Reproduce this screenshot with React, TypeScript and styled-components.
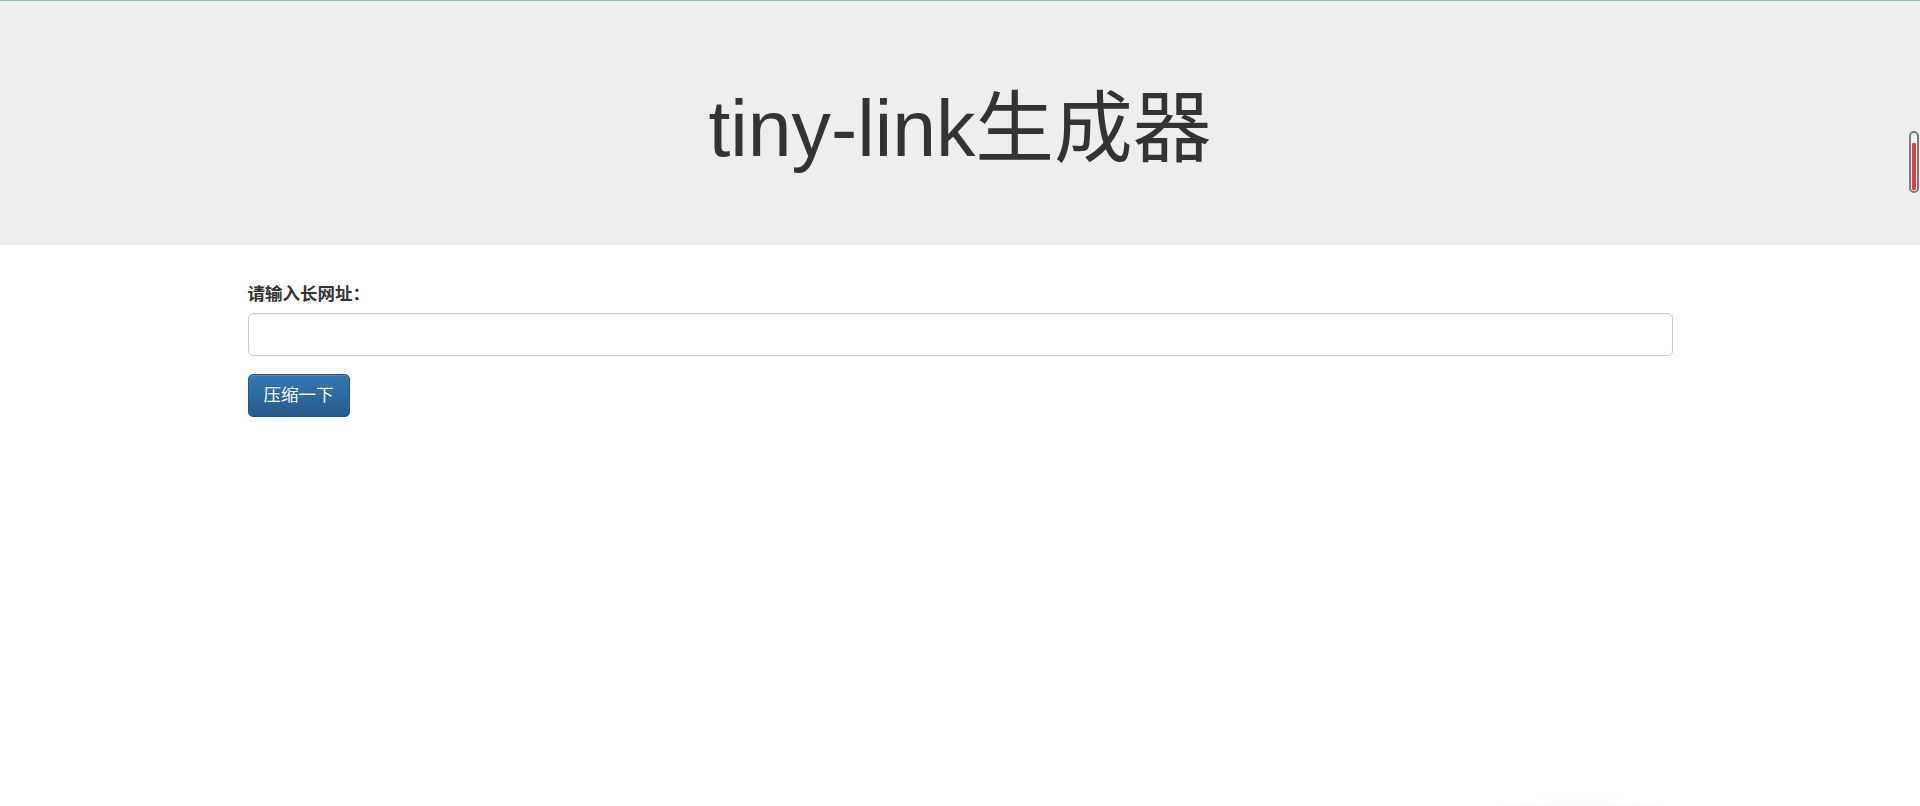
import React from "react";
import styled, { createGlobalStyle } from "styled-components";

const GlobalStyle = createGlobalStyle`
  html, body {
    margin: 0;
    padding: 0;
    background: #fff;
  }
  body {
    font-family: "Liberation Sans", Arial, "Noto Sans CJK SC", sans-serif;
    font-size: 17.5px;
    line-height: 1.42857;
    color: #333;
  }
  * { box-sizing: border-box; }
`;

const Jumbotron = styled.header`
  background: #eeeeee;
  border-top: 1px solid #8fb8bf;
  padding: 60px 0;
  margin-bottom: 37px;
`;

const Container = styled.div`
  width: 1462.5px;
  margin: 0 auto;
  padding: 0 18.75px;
`;

const Title = styled.h1`
  margin: 25px 0 12.5px;
  font-family: "Liberation Sans", Arial, "Noto Sans CJK SC", sans-serif;
  font-weight: 400;
  font-size: 78.75px;
  line-height: 86.6px;
  height: 86.6px;
  text-align: center;
  color: #333;
`;

const FormGroup = styled.div`
  margin-bottom: 18.75px;
`;

const Label = styled.label`
  display: block;
  height: 25px;
  margin-bottom: 6px;
  font-weight: 700;
  font-size: 17.5px;
  line-height: 25px;
  font-family: "Liberation Sans", "Noto Sans CJK SC", sans-serif;
  color: #333;
`;

const Input = styled.input`
  display: block;
  width: 100%;
  height: 42.5px;
  padding: 7.5px 15px;
  font-size: 17.5px;
  line-height: 25px;
  color: #555;
  background: #fff;
  border: 1.25px solid #ccc;
  border-radius: 5px;
  box-shadow: inset 0 1px 1px rgba(0, 0, 0, 0.075);
  outline: none;
`;

const Button = styled.button`
  display: block;
  height: 42.5px;
  padding: 7.5px 15px;
  font-family: "Liberation Serif", "Noto Sans CJK SC", sans-serif;
  font-size: 17.5px;
  line-height: 25px;
  color: #fff;
  background-image: linear-gradient(to bottom, #337ab7 0, #265a88 100%);
  border: 1.25px solid #245580;
  border-radius: 5px;
  box-shadow: inset 0 1px 0 rgba(255, 255, 255, 0.15), 0 1px 1px rgba(0, 0, 0, 0.075);
  text-shadow: 0 -1px 0 rgba(0, 0, 0, 0.2);
  cursor: pointer;
`;

const Gauge = styled.div`
  position: fixed;
  left: 1909px;
  top: 131px;
  width: 10px;
  height: 62px;
  border: 2px solid #7a7a7a;
  border-radius: 5px;
  background: #f2f2f2;
  padding: 1px;
  display: flex;
  flex-direction: column;
  justify-content: flex-end;
`;

const GaugeFill = styled.div`
  background: #f0393f;
  border-radius: 1px;
`;

const BottomShade = styled.div`
  position: fixed;
  left: 1500px;
  bottom: -14px;
  width: 160px;
  height: 16px;
  border-radius: 50%;
  box-shadow: 0 0 10px rgba(0, 0, 0, 0.06);
  background: #fafafa;
`;

export default function App() {
  const level = 84;
  return (
    <>
      <GlobalStyle />
      <Jumbotron>
        <Container>
          <Title>tiny-link生成器</Title>
        </Container>
      </Jumbotron>
      <Container>
        <form onSubmit={(e) => e.preventDefault()}>
          <FormGroup>
            <Label htmlFor="url">请输入长网址：</Label>
            <Input id="url" type="text" />
          </FormGroup>
          <Button type="submit">压缩一下</Button>
        </form>
      </Container>
      <Gauge>
        <GaugeFill style={{ height: `${level}%` }} />
      </Gauge>
      <BottomShade />
    </>
  );
}
